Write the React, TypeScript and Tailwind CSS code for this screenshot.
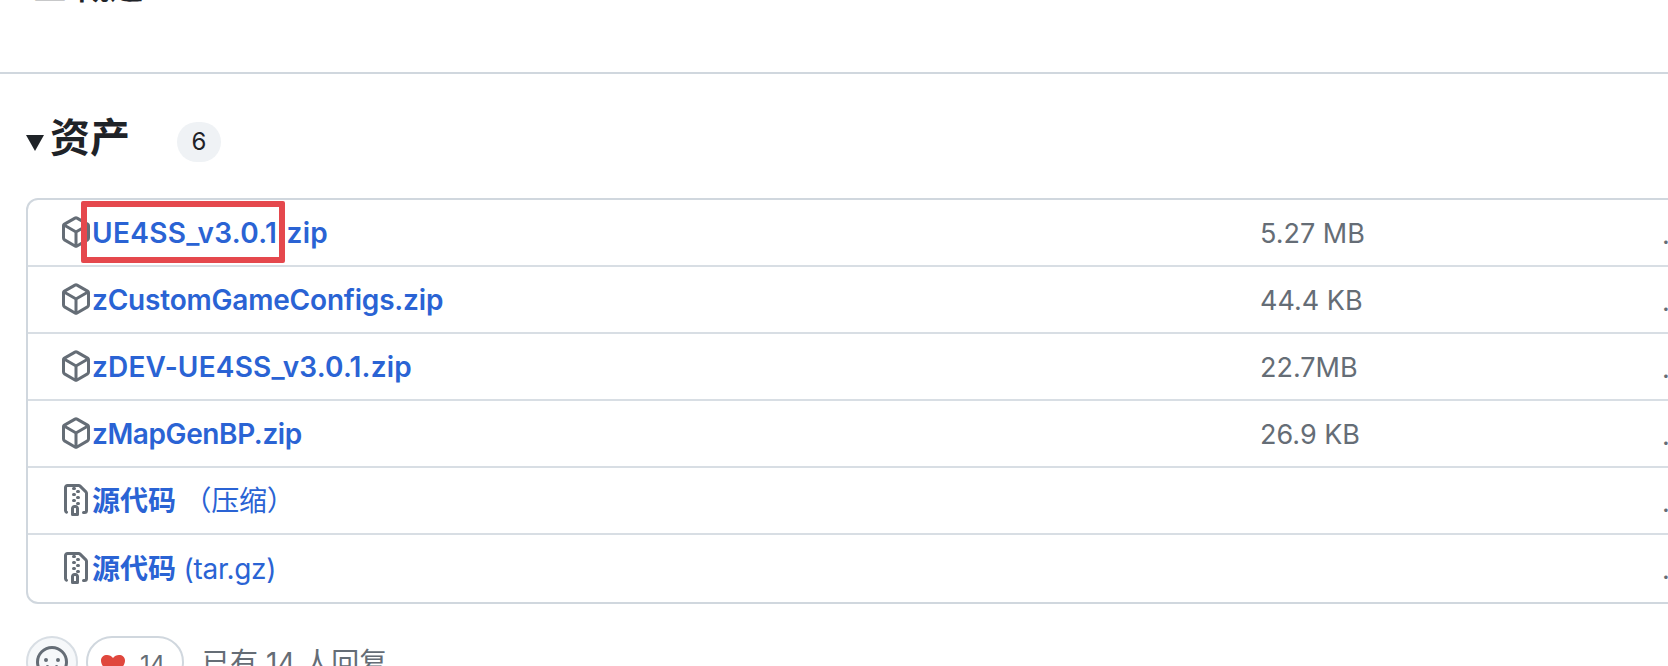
import React from "react";

const font = '"Inter","Liberation Sans","Noto Sans CJK SC",sans-serif';

function Box() {
  return (
    <svg width="32" height="32" viewBox="0 0 16 16" fill="#656d76" className="shrink-0">
      <path d="m8.878.392 5.25 3.045c.54.314.872.89.872 1.514v6.098a1.75 1.75 0 0 1-.872 1.514l-5.25 3.045a1.75 1.75 0 0 1-1.756 0l-5.25-3.045A1.75 1.75 0 0 1 1 11.049V4.951c0-.624.332-1.201.872-1.514L7.122.392a1.75 1.75 0 0 1 1.756 0ZM7.875 1.69l-4.63 2.685L8 7.133l4.755-2.758-4.63-2.685a.248.248 0 0 0-.25 0ZM2.5 5.677v5.372c0 .09.047.171.125.216l4.625 2.683V8.432Zm6.25 8.271 4.625-2.683a.25.25 0 0 0 .125-.216V5.677L8.75 8.432Z" />
    </svg>
  );
}

function Zip() {
  return (
    <svg width="32" height="32" viewBox="0 0 16 16" fill="#656d76" className="shrink-0">
      <path d="M3.5 1.75v11.5c0 .09.048.173.126.217a.75.75 0 0 1-.752 1.298A1.748 1.748 0 0 1 2 13.25V1.75C2 .784 2.784 0 3.75 0h5.586c.464 0 .909.185 1.237.513l2.914 2.914c.329.328.513.773.513 1.237v8.586A1.75 1.75 0 0 1 12.25 15h-.5a.75.75 0 0 1 0-1.5h.5a.25.25 0 0 0 .25-.25V4.664a.25.25 0 0 0-.073-.177L9.513 1.573a.25.25 0 0 0-.177-.073H7.25a.75.75 0 0 1 0 1.5h-.5a.75.75 0 0 1 0-1.5h-3a.25.25 0 0 0-.25.25Zm3.75 8.75h.5c.966 0 1.75.784 1.75 1.75v3a.75.75 0 0 1-.75.75h-2.5a.75.75 0 0 1-.75-.75v-3c0-.966.784-1.75 1.75-1.75ZM6 5.25a.75.75 0 0 1 .75-.75h.5a.75.75 0 0 1 0 1.5h-.5A.75.75 0 0 1 6 5.25Zm.75 2.25h.5a.75.75 0 0 1 0 1.5h-.5a.75.75 0 0 1 0-1.5ZM8 6.75A.75.75 0 0 1 8.75 6h.5a.75.75 0 0 1 0 1.5h-.5A.75.75 0 0 1 8 6.75ZM8.75 3h.5a.75.75 0 0 1 0 1.5h-.5a.75.75 0 0 1 0-1.5ZM8 9.75A.75.75 0 0 1 8.75 9h.5a.75.75 0 0 1 0 1.5h-.5A.75.75 0 0 1 8 9.75Zm-1 2.5v2.25h1v-2.25a.25.25 0 0 0-.25-.25h-.5a.25.25 0 0 0-.25.25Z" />
    </svg>
  );
}

const rows: { icon: "box" | "zip"; name: React.ReactNode; size: string; h: string }[] = [
  { icon: "box", h: "h-[65px]", name: <span className="font-semibold tracking-[0.33px]">UE4SS_v3.0.1.zip</span>, size: "5.27 MB" },
  { icon: "box", h: "h-[67px]", name: <span className="font-semibold tracking-[-0.19px]">zCustomGameConfigs.zip</span>, size: "44.4 KB" },
  { icon: "box", h: "h-[67px]", name: <span className="font-semibold tracking-[0.2px]">zDEV-UE4SS_v3.0.1.zip</span>, size: "22.7MB" },
  { icon: "box", h: "h-[67px]", name: <span className="font-semibold tracking-[-0.4px]">zMapGenBP.zip</span>, size: "26.9 KB" },
  { icon: "zip", h: "h-[67px]", name: <><span className="font-semibold">源代码</span><span className="tracking-[-0.3px]">&nbsp;（压缩）</span></>, size: "" },
  { icon: "zip", h: "h-[69px]", name: <><span className="font-semibold">源代码</span><span className="tracking-[-0.3px]">&nbsp;(tar.gz)</span></>, size: "" },
];

export default function App() {
  return (
    <div className="h-[666px] w-[1668px] overflow-hidden bg-white text-[#1f2328]" style={{ fontFamily: font }}>
      <div className="h-[74px] overflow-hidden border-b-2 border-[#d0d7de]">
        <div className="-mt-[29px] pl-[33px] text-[34px] leading-[32px] font-semibold">三 概述</div>
      </div>
      <div className="flex h-[124px] items-center pl-[26px] pt-[12px]">
        <span className="mt-[2px] h-0 w-0 border-x-[9px] border-t-[16px] border-x-transparent border-t-[#1f2328]" />
        <span className="ml-[6px] -mt-[9px] text-[40px] leading-none font-bold">资产</span>
        <span className="ml-[47px] flex h-[40px] w-[44px] items-center justify-center rounded-full bg-[#eff2f5] text-[24px]">6</span>
      </div>
      <div className="ml-[26px] w-[1700px] rounded-l-[12px] border-2 border-[#d0d7de]">
        {rows.map((r, i) => (
          <div key={i} className={`flex ${r.h} ${i === 0 ? "" : "border-t-2 border-[#d8dee4]"}`}>
            <div className="relative flex w-[1232px] items-center pl-[32px] text-[28px] text-[#2a63d4]">
              <span className="-mt-[2px] flex">{r.icon === "box" ? <Box /> : <Zip />}</span>
              <span className="mt-[1px]">{r.name}</span>
              {i === 0 && (
                <span className="absolute left-[53px] top-[1px] h-[62px] w-[204px] rounded-[2px] border-[6px] border-[#e5484d]" />
              )}
            </div>
            <div className="w-[402px] pt-[16px] text-[27px] leading-[36px] text-[#656d76]">{r.size}</div>
            <div className="pt-[17px] text-[27px] leading-[36px] text-[#656d76]">.</div>
          </div>
        ))}
      </div>
      <div className="ml-[26px] mt-[32px] flex items-start gap-[8px]">
        <span className="flex h-[52px] w-[52px] items-center justify-center rounded-full border-2 border-[#d8dee4] bg-[#f6f8fa]">
          <svg width="32" height="32" viewBox="0 0 16 16" fill="#656d76">
            <path d="M8 0a8 8 0 1 1 0 16A8 8 0 0 1 8 0ZM1.5 8a6.5 6.5 0 1 0 13 0 6.5 6.5 0 0 0-13 0Zm3.82 1.636a.75.75 0 0 1 1.038.175l.007.009c.103.118.22.222.35.31.264.178.683.37 1.285.37.602 0 1.02-.192 1.285-.371.13-.088.247-.192.35-.31l.007-.008a.75.75 0 0 1 1.222.87l-.022-.015c.02.013.021.015.021.015v.001l-.001.002-.002.003-.005.007-.014.019a2.066 2.066 0 0 1-.184.213c-.16.166-.338.316-.53.445-.63.418-1.37.638-2.127.629-.946 0-1.652-.308-2.126-.63a3.331 3.331 0 0 1-.715-.657l-.014-.02-.005-.006-.002-.003v-.002h-.001l.613-.432-.614.43a.75.75 0 0 1 .183-1.044ZM12 7a1 1 0 1 1-2 0 1 1 0 0 1 2 0ZM5 8a1 1 0 1 1 0-2 1 1 0 0 1 0 2Z" />
          </svg>
        </span>
        <span className="flex h-[52px] w-[98px] items-center rounded-full border-2 border-[#d0d7de] pl-[13px] pt-[6px] text-[24px] text-[#656d76]">
          <svg width="24" height="24" viewBox="0 0 24 24" fill="#e0473d"><path d="M12 22C5 17 0 13 0 7.5 0 4 2.8 2 6 2 8.4 2 10.6 3 12 5 13.4 3 15.6 2 18 2 21.2 2 24 4 24 7.5 24 13 19 17 12 22Z" /></svg>
          <span className="ml-[15px]">14</span>
        </span>
        <span className="ml-[10px] pt-[6px] text-[28px] leading-[42px] text-[#656d76]">已有 14 人回复</span>
      </div>
    </div>
  );
}
